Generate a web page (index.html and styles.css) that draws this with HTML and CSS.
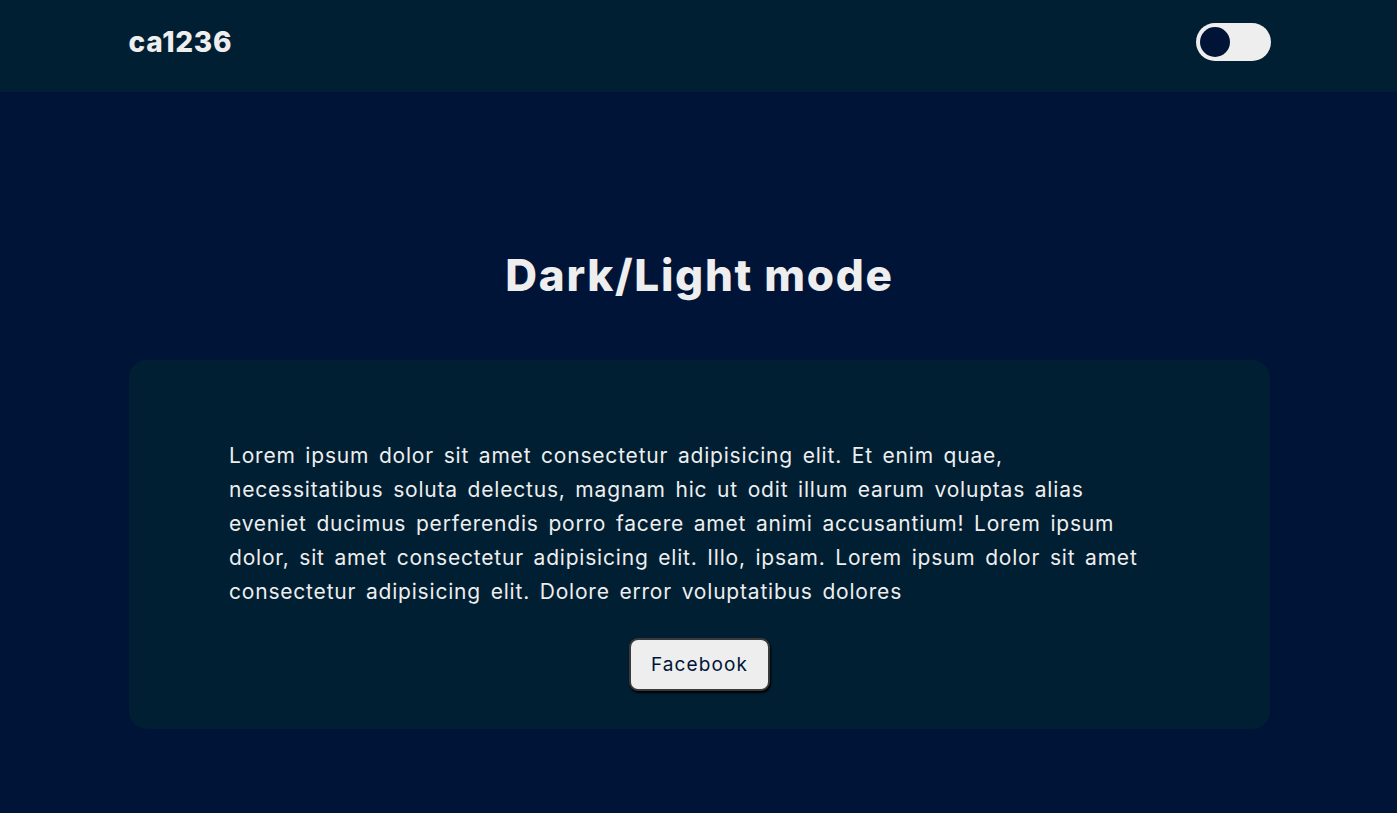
FILE: index.html
```html
<!DOCTYPE html>
<html lang="en">
<head>
<meta charset="utf-8">
<title>Dark/Light mode</title>
<link rel="stylesheet" href="styles.css">
</head>
<body>
<header class="topbar">
  <div class="topbar-inner">
    <div class="logo">ca1236</div>
    <button class="toggle" aria-label="Toggle theme"><span class="knob"></span></button>
  </div>
</header>
<main class="main">
  <h1 class="title">Dark/Light mode</h1>
  <section class="card">
    <p class="text">Lorem ipsum dolor sit amet consectetur adipisicing elit. Et enim quae, necessitatibus soluta delectus, magnam hic ut odit illum earum voluptas alias eveniet ducimus perferendis porro facere amet animi accusantium! Lorem ipsum dolor, sit amet consectetur adipisicing elit. Illo, ipsam. Lorem ipsum dolor sit amet consectetur adipisicing elit. Dolore error voluptatibus dolores</p>
    <div class="actions"><button class="btn">Facebook</button></div>
  </section>
</main>
</body>
</html>
```
FILE: styles.css
```css
* { box-sizing: border-box; }
html, body { margin: 0; padding: 0; }
body {
  background: #001438;
  color: #eeeeee;
  font-family: Inter, "Noto Sans", sans-serif;
  min-height: 813px;
  padding-left: 2px;
}
.topbar {
  background: #011f33;
  height: 92px;
  margin-left: -2px;
  padding-left: 2px;
}
.topbar-inner {
  width: 1142px;
  margin: 0 auto;
  height: 100%;
  display: flex;
  align-items: center;
  justify-content: space-between;
  padding-bottom: 8px;
}
.logo {
  font-size: 28px;
  font-weight: 800;
  color: #eeeeee;
  letter-spacing: 0.7px;
}
.toggle {
  width: 75px;
  height: 38px;
  border-radius: 19px;
  background: #eeeeee;
  border: none;
  padding: 0 0 0 4px;
  display: flex;
  align-items: center;
  cursor: pointer;
}
.knob {
  width: 30px;
  height: 30px;
  border-radius: 50%;
  background: #001438;
}
.main {
  width: 1141px;
  margin: 0 auto;
  padding-top: 150px;
}
.title {
  margin: 0 0 52px;
  text-align: center;
  font-size: 44px;
  font-weight: 800;
  line-height: 66px;
  letter-spacing: 1.7px;
}
.card {
  background: #011f33;
  border-radius: 18px;
  padding: 79px 114px 38px 100px;
}
.text {
  margin: 0;
  font-size: 21px;
  font-weight: 400;
  line-height: 34px;
  letter-spacing: 0.8px;
  word-spacing: 3px;
}
.actions {
  display: flex;
  justify-content: center;
  margin-top: 29px;
  margin-right: -14px;
}
.btn {
  width: 141px;
  height: 53px;
  background: #eeeeee;
  color: #001438;
  font-family: inherit;
  font-size: 19px;
  letter-spacing: 1.1px;
  border: 2px solid #3a3a3a;
  border-radius: 9px;
  box-shadow: 1px 2px 2px #000;
  cursor: pointer;
}
```
